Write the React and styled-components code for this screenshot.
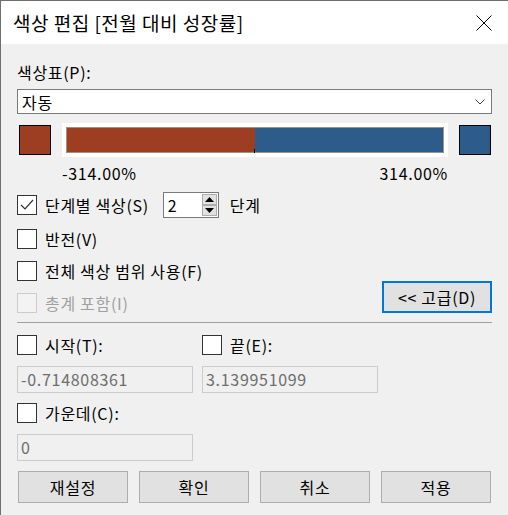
import React from 'react';
import styled, { createGlobalStyle } from 'styled-components';

const GlobalStyle = createGlobalStyle`
    html, body {
        margin: 0;
        padding: 0;
        background: #f0f0f0;
    }
    body {
        font-family: "Noto Sans CJK KR", "Noto Sans", sans-serif;
        font-size: 16px;
        letter-spacing: 0.7px;
        color: #000;
    }
`

const Window = styled.div`
    width: 508px;
    height: 515px;
    box-sizing: border-box;
    border-top: 1px solid #6e6e6e;
    border-left: 1px solid #6e6e6e;
    background: #f0f0f0;
    overflow: hidden;
    display: flex;
    flex-direction: column;
`

const TitleBar = styled.div`
    height: 43px;
    background: #fff;
    display: flex;
    align-items: center;
    justify-content: space-between;
    padding: 0 16px 0 12px;
`

const TitleText = styled.span`
    font-size: 19px;
    letter-spacing: 0.5px;
    line-height: 22px;
`

const Body = styled.div`
    display: flex;
    flex-direction: column;
    padding: 0 16px 0 16px;
`

const Label = styled.div`
    height: 20px;
    line-height: 20px;
    margin-top: ${p => p.mt || 0}px;
    color: ${p => p.disabled ? '#a0a0a0' : '#000'};
`

const Combo = styled.div`
    margin-top: 7px;
    height: 25px;
    box-sizing: border-box;
    border: 1px solid #7a7a7a;
    background: #fff;
    display: flex;
    align-items: center;
    justify-content: space-between;
    padding: 0 6px 0 4px;
`

const GradientRow = styled.div`
    margin-top: 9px;
    height: 34px;
    display: flex;
    align-items: center;
    justify-content: space-between;
`

const Swatch = styled.div`
    width: 32px;
    height: 30px;
    box-sizing: border-box;
    border: 1px solid #000;
    background: ${p => p.color};
    margin: 0 ${p => p.right ? 1 : 0}px 0 ${p => p.right ? 0 : 2}px;
`

const BarFrame = styled.div`
    width: 386px;
    height: 34px;
    box-sizing: border-box;
    background: #fff;
    padding: 4px;
`

const Bar = styled.div`
    height: 100%;
    box-sizing: border-box;
    border: 1px solid #9b9482;
    display: flex;
    position: relative;
`

const BarPart = styled.div`
    flex: 1;
    background: ${p => p.color};
`

const Tick = styled.div`
    position: absolute;
    left: 187px;
    bottom: -1px;
    width: 1px;
    height: 4px;
    background: #000;
`

const PercentRow = styled.div`
    margin-top: 6px;
    height: 20px;
    line-height: 20px;
    display: flex;
    justify-content: space-between;
    padding: 0 44px 0 45px;
`

const CheckRow = styled.div`
    display: flex;
    align-items: center;
    height: ${p => p.h || 20}px;
    margin-top: ${p => p.mt || 0}px;
    gap: 8px;
`

const Box = styled.div`
    width: 20px;
    height: 20px;
    box-sizing: border-box;
    border: 1px solid ${p => p.disabled ? '#cccccc' : '#333333'};
    background: ${p => p.disabled ? '#f3f3f3' : '#fff'};
    display: flex;
    align-items: center;
    justify-content: center;
    flex-shrink: 0;
`

const CheckText = styled.span`
    line-height: 20px;
    white-space: nowrap;
    color: ${p => p.disabled ? '#a0a0a0' : '#000'};
`

const Spinner = styled.div`
    width: 56px;
    height: 26px;
    box-sizing: border-box;
    border: 1px solid #7a7a7a;
    background: #fff;
    display: flex;
    align-items: center;
    justify-content: space-between;
    padding: 1px 1px 1px 4px;
    margin-left: 6px;
    margin-right: 3px;
`

const SpinButtons = styled.div`
    width: 15px;
    height: 100%;
    display: flex;
    flex-direction: column;
`

const SpinHalf = styled.div`
    flex: 1;
    box-sizing: border-box;
    border: 1px solid #adadad;
    background: #e1e1e1;
    display: flex;
    align-items: center;
    justify-content: center;
`

const OptionsArea = styled.div`
    display: flex;
    justify-content: space-between;
    align-items: flex-end;
    margin-top: 11px;
`

const OptionsColumn = styled.div`
    display: flex;
    flex-direction: column;
    gap: 12px;
`

const AdvancedButton = styled.div`
    width: 110px;
    height: 32px;
    box-sizing: border-box;
    border: 2px solid #0078d7;
    background: #e1e1e1;
    display: flex;
    align-items: center;
    justify-content: center;
`

const Separator = styled.div`
    margin-top: 9px;
    height: 1px;
    background: #a0a0a0;
`

const FieldGrid = styled.div`
    display: grid;
    grid-template-columns: 176px 176px;
    column-gap: 9px;
    margin-top: ${p => p.mt || 0}px;
`

const DisabledInput = styled.div`
    height: 27px;
    box-sizing: border-box;
    border: 1px solid #cccccc;
    background: #f0f0f0;
    color: #6d6d6d;
    line-height: 25px;
    padding-left: 3px;
    margin-top: ${p => p.mt || 0}px;
`

const ButtonBar = styled.div`
    display: grid;
    grid-template-columns: repeat(4, 110px);
    column-gap: 11px;
    margin-top: 10px;
    padding-left: 1px;
`

const DialogButton = styled.div`
    height: 32px;
    box-sizing: border-box;
    border: 1px solid #adadad;
    background: #e1e1e1;
    display: flex;
    align-items: center;
    justify-content: center;
`

function CheckBox({ checked, disabled, children }) {
	return (
		<>
			<Box disabled={disabled}>
				{checked && (
					<svg width="14" height="12" viewBox="0 0 14 12">
						<polyline points="1,6 5,10 13,1" fill="none" stroke="#333" strokeWidth="1.2" />
					</svg>
				)}
			</Box>
			<CheckText disabled={disabled}>{children}</CheckText>
		</>
	);
}

export default function App() {
	return (
		<Window>
			<GlobalStyle />
			<TitleBar>
				<TitleText>색상 편집 [전월 대비 성장률]</TitleText>
				<svg width="16" height="16" viewBox="0 0 16 16">
					<path d="M0.5 0.5 L15.5 15.5 M15.5 0.5 L0.5 15.5" stroke="#000" strokeWidth="1" fill="none" />
				</svg>
			</TitleBar>
			<Body>
				<Label mt={18}>색상표(P):</Label>
				<Combo>
					<span>자동</span>
					<svg width="10" height="6" viewBox="0 0 10 6">
						<polyline points="0.5,0.5 5,5 9.5,0.5" fill="none" stroke="#444" strokeWidth="1" />
					</svg>
				</Combo>
				<GradientRow>
					<Swatch color="#9d3e23" />
					<BarFrame>
						<Bar>
							<BarPart color="#9d3e23" />
							<BarPart color="#2e5c8a" />
							<Tick />
						</Bar>
					</BarFrame>
					<Swatch color="#2e5c8a" right />
				</GradientRow>
				<PercentRow>
					<span>-314.00%</span>
					<span>314.00%</span>
				</PercentRow>
				<CheckRow h={26} mt={9}>
					<CheckBox checked>단계별 색상(S)</CheckBox>
					<Spinner>
						<span>2</span>
						<SpinButtons>
							<SpinHalf>
								<svg width="9" height="5" viewBox="0 0 9 5"><polygon points="4.5,0 9,5 0,5" fill="#000" /></svg>
							</SpinHalf>
							<SpinHalf>
								<svg width="9" height="5" viewBox="0 0 9 5"><polygon points="0,0 9,0 4.5,5" fill="#000" /></svg>
							</SpinHalf>
						</SpinButtons>
					</Spinner>
					<CheckText>단계</CheckText>
				</CheckRow>
				<OptionsArea>
					<OptionsColumn>
						<CheckRow><CheckBox>반전(V)</CheckBox></CheckRow>
						<CheckRow><CheckBox>전체 색상 범위 사용(F)</CheckBox></CheckRow>
						<CheckRow><CheckBox disabled>총계 포함(I)</CheckBox></CheckRow>
					</OptionsColumn>
					<AdvancedButton>&lt;&lt; 고급(D)</AdvancedButton>
				</OptionsArea>
				<Separator />
				<FieldGrid mt={12}>
					<CheckRow><CheckBox>시작(T):</CheckBox></CheckRow>
					<CheckRow><CheckBox>끝(E):</CheckBox></CheckRow>
					<DisabledInput mt={11}>-0.714808361</DisabledInput>
					<DisabledInput mt={11}>3.139951099</DisabledInput>
				</FieldGrid>
				<CheckRow mt={10}><CheckBox>가운데(C):</CheckBox></CheckRow>
				<FieldGrid mt={11}>
					<DisabledInput>0</DisabledInput>
				</FieldGrid>
				<ButtonBar>
					<DialogButton>재설정</DialogButton>
					<DialogButton>확인</DialogButton>
					<DialogButton>취소</DialogButton>
					<DialogButton>적용</DialogButton>
				</ButtonBar>
			</Body>
		</Window>
	);
}
